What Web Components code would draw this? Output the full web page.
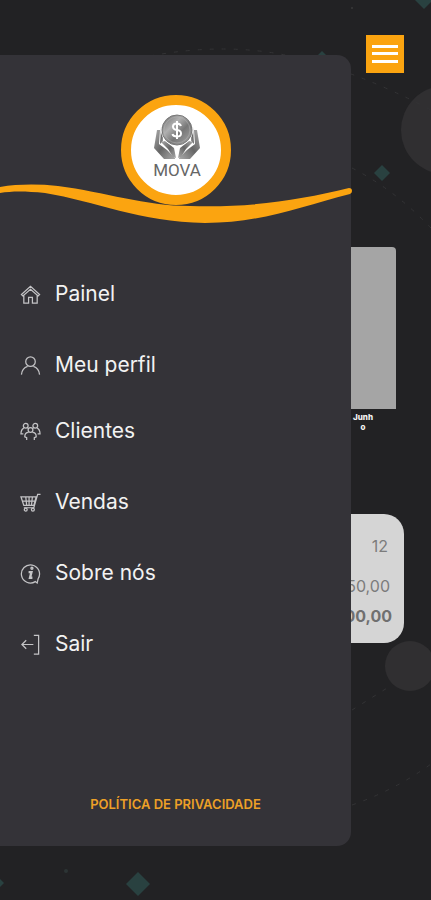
<!DOCTYPE html>
<html lang="pt-BR">
<head>
<meta charset="utf-8">
<meta name="viewport" content="width=device-width, initial-scale=1">
<title>Mova</title>
<style>
body {
  margin: 0;
  background-color: #222224;
  color: #f2f2f2;
  font-family: Inter, 'Liberation Sans', sans-serif;
}
</style>
</head>
<body>
<mova-app>
  <mova-backdrop slot="backdrop"></mova-backdrop>
  <menu-button></menu-button>
  <month-chart month="Junho"></month-chart>
  <sales-card>
    <span slot="count">12</span>
    <span slot="paid">350,00</span>
    <span slot="total">1.200,00</span>
  </sales-card>
  <side-drawer slot="drawer">
    <drawer-logo slot="header"></drawer-logo>
    <menu-item icon="home">Painel</menu-item>
    <menu-item icon="user">Meu perfil</menu-item>
    <menu-item slot="business" icon="group">Clientes</menu-item>
    <menu-item slot="business" icon="cart">Vendas</menu-item>
    <menu-item slot="business" icon="info">Sobre nós</menu-item>
    <menu-item slot="business" icon="exit">Sair</menu-item>
    <policy-link slot="footer">POLÍTICA DE PRIVACIDADE</policy-link>
  </side-drawer>
</mova-app>

<script>
/**
 * Creates a template element from a string.
 *
 * @param {string} html - The markup and styles.
 * @returns {HTMLTemplateElement} The template.
 */
function createTemplate (html) {
  const template = document.createElement('template')
  template.innerHTML = html
  return template
}

/**
 * Base class that attaches the shadow root and clones the template.
 */
class BaseElement extends HTMLElement {
  constructor () {
    super()
    this.attachShadow({ mode: 'open' })
      .appendChild(this.constructor.template.content.cloneNode(true))
  }
}

/**
 * The page, with the drawer stacked in the same grid cell.
 */
customElements.define('mova-app', class extends BaseElement {
  static template = createTemplate(`
<style>
:host {
  display: grid;
  grid-template-columns: minmax(0, 1fr);
  min-height: 100vh;
  position: relative;
  overflow: hidden;
}
main, .drawer {
  grid-area: 1 / 1;
  position: relative;
}
main {
  display: flex;
  flex-direction: column;
  padding: 35px 27px;
}
.drawer {
  display: flex;
  padding: 55px 80px 54px 0;
  pointer-events: none;
}
</style>
<slot name="backdrop"></slot>
<main><slot></slot></main>
<div class="drawer"><slot name="drawer"></slot></div>
`)
})

/**
 * Faint shapes behind the page.
 */
customElements.define('mova-backdrop', class extends BaseElement {
  static template = createTemplate(`
<style>
:host {
  display: block;
  position: absolute;
  inset: 0;
}
svg {
  display: block;
  width: 100%;
  height: 100%;
}
</style>
<svg viewBox="0 0 431 900" preserveAspectRatio="xMidYMid slice" aria-hidden="true">
  <g fill="#302f31">
    <circle cx="445" cy="130" r="44"/>
    <circle cx="410" cy="666" r="25"/>
  </g>
  <g fill="#294140">
    <path d="M382 165l8 8-8 8-8-8z"/>
    <path d="M424-9l9 9-9 9-9-9z"/>
    <path d="M138 872l12 12-12 12-12-12z"/>
    <path d="M-5 874l9 9-9 9z"/>
    <path d="M322 51l4 4-4 4-4-4z"/>
  </g>
  <g fill="none" stroke="#333335" stroke-dasharray="4 8">
    <path d="M150 56Q225 42 290 56T431 110"/>
    <path d="M352 168Q395 190 431 228"/>
    <path d="M352 710L392 685"/>
    <path d="M352 805Q395 790 431 764"/>
  </g>
  <circle cx="352" cy="8" r="1" fill="#3a3a3a"/>
  <circle cx="66" cy="871" r="2" fill="#2c3435"/>
</svg>
`)
})

customElements.define('menu-button', class extends BaseElement {
  static template = createTemplate(`
<style>
:host {
  display: block;
  align-self: flex-end;
}
button {
  display: flex;
  align-items: center;
  justify-content: center;
  width: 38px;
  height: 38px;
  padding: 0;
  border: none;
  background-color: #fba410;
  cursor: pointer;
}
svg { display: block; }
</style>
<button type="button" aria-label="Menu">
  <svg width="26" height="20" viewBox="0 0 26 20" stroke="#fff" stroke-width="3">
    <path d="M0 2.500h26M0 9.500h26M0 17.500h26"/>
  </svg>
</button>
`)
})

/**
 * Chart with one bar and the month below it.
 */
customElements.define('month-chart', class extends BaseElement {
  static template = createTemplate(`
<style>
:host {
  display: flex;
  flex-direction: column;
  align-items: center;
  align-self: flex-end;
  width: 66px;
  margin: 174px 8px 0 0;
}
.bar {
  width: 100%;
  height: 162px;
  border-radius: 4px 4px 0 0;
  background-color: #a5a5a5;
}
.month {
  width: 20px;
  margin-top: 3px;
  font-size: 8px;
  font-weight: 800;
  line-height: 10px;
  text-align: center;
  overflow-wrap: anywhere;
}
</style>
<div class="bar"></div>
<div class="month"></div>
`)

  connectedCallback () {
    this.shadowRoot.querySelector('.month').textContent = this.getAttribute('month')
  }
})

/**
 * Card with the figures of the month.
 */
customElements.define('sales-card', class extends BaseElement {
  static template = createTemplate(`
<style>
:host {
  display: flex;
  flex-direction: column;
  align-items: flex-end;
  margin-top: 82px;
  padding: 17px 12px 12px;
  border-radius: 20px;
  background-color: #d5d5d5;
  color: #7c7c7c;
  font-size: 16px;
  line-height: 30px;
}
.count { margin: 0 4px 10px 0; }
.paid { margin-right: 2px; }
.total { font-weight: 700; color: #707070; }
</style>
<div class="count"><slot name="count"></slot></div>
<div class="paid"><slot name="paid"></slot></div>
<div class="total"><slot name="total"></slot></div>
`)
})

/**
 * Drawer with a header, two groups of items and a footer.
 */
customElements.define('side-drawer', class extends BaseElement {
  static template = createTemplate(`
<style>
:host {
  display: flex;
  flex: 1;
  flex-direction: column;
  min-width: 0;
  border-radius: 0 14px 14px 0;
  background-color: #343338;
  pointer-events: auto;
}
nav {
  display: flex;
  flex-direction: column;
  gap: 40px;
  padding: 55px 20px 40px;
}
.group {
  display: flex;
  flex-direction: column;
  gap: 45px;
}
footer {
  margin-top: auto;
  padding-bottom: 32px;
  text-align: center;
}
</style>
<slot name="header"></slot>
<nav>
  <div class="group"><slot></slot></div>
  <div class="group"><slot name="business"></slot></div>
</nav>
<footer><slot name="footer"></slot></footer>
`)
})

/**
 * Round logo that rests on the orange wave.
 */
customElements.define('drawer-logo', class extends BaseElement {
  static template = createTemplate(`
<style>
:host { display: block; }
svg {
  display: block;
  width: 100%;
  overflow: visible;
}
text {
  font-family: Roboto, sans-serif;
  font-size: 17px;
}
</style>
<svg viewBox="0 0 351 171" role="img" aria-label="Mova">
  <defs>
    <linearGradient id="steel" x1="0" y1="0" x2="1" y2="1">
      <stop offset="0" stop-color="#666"/>
      <stop offset=".35" stop-color="#b0b0b0"/>
      <stop offset=".6" stop-color="#777"/>
      <stop offset="1" stop-color="#aaa"/>
    </linearGradient>
    <linearGradient id="hand" x1="0" y1="0" x2="1" y2="1">
      <stop offset="0" stop-color="#aaa"/>
      <stop offset=".5" stop-color="#666"/>
      <stop offset="1" stop-color="#aaa"/>
    </linearGradient>
  </defs>
  <path fill="#fba410" d="M0 132C18 129 38 129 58 131C105 137 145 151 190 151C250 153 300 145 349 133Q352 133 352 136Q352 138 350 139C300 152 260 168 205 168C140 167 95 146 45 138C25 136 12 136 0 138Z"/>
  <circle cx="176" cy="95" r="50" fill="#fff" stroke="#fba410" stroke-width="10"/>
  <g fill="url(#hand)">
    <path d="M157 75h3l-1 14 8 6 8 8v1h-11l-10-11z"/>
    <path d="M161 72h2v14l-3 3z"/>
    <path d="M161 87l4-1 9 7 2 10-3-1-5-8z"/>
  </g>
  <g fill="url(#hand)" transform="matrix(-1 0 0 1 354 0)">
    <path d="M157 75h3l-1 14 8 6 8 8v1h-11l-10-11z"/>
    <path d="M161 72h2v14l-3 3z"/>
    <path d="M161 87l4-1 9 7 2 10-3-1-5-8z"/>
  </g>
  <circle cx="177" cy="75" r="16" fill="#fff"/>
  <circle cx="177" cy="75" r="15" fill="url(#steel)" stroke="#777"/>
  <circle cx="177" cy="75" r="13" fill="none" stroke="#b5b5b5" stroke-width=".5"/>
  <path d="M181 71Q180 68.500 177 68.500Q173 68.500 173 71.500T177 75T181 78.500T177 81.500Q173 81.500 172.500 79M177 66V84" fill="none" stroke="#fff" stroke-width="2"/>
  <text x="177" y="121" text-anchor="middle" fill="#666">MOVA</text>
</svg>
`)
})

/**
 * Icons of the menu, on a 22 x 22 grid.
 */
const icons = {
  home: '<path d="M1.500 11L11 2.500L20.500 11L19 12.500L11 5.500L3 12.500ZM4 12V20H9V14H13V20H18V12"/>',
  user: '<circle cx="11" cy="7" r="5"/><path d="M1.500 20.500C2 15.500 5 13 8 12M14 12C17 13 20 15.500 20.500 20.500"/>',
  group: '<circle cx="6" cy="5" r="2.500"/><circle cx="16" cy="5" r="2.500"/><circle cx="11" cy="9.500" r="2.500"/><path d="M4 7.500Q1 9 1 13.500H3.500M8 7.500L9 8M18 7.500Q21 9 21 13.500H18.500M14 7.500L13 8M9 12Q5 12 5 16.500L7 17.500V20M13 12Q17 12 17 16.500L15 17.500V20"/>',
  cart: '<path d="M1 5H17L14.500 14H4ZM21.500 2.500H18.500L14.500 16.500H4M2 9.500H15.500M6 5L7 14M9.500 5V14M13 5L12 14"/><circle cx="6" cy="18.500" r="1.500"/><circle cx="13.500" cy="18.500" r="1.500"/>',
  info: '<path d="M16 19.500A9.500 9.500 0 1 1 19 16.500L18 21Z"/><path d="M9 9.500H12L10.500 15.500H13" stroke-width="2.500"/><circle cx="12.500" cy="5.500" r="1" stroke-width="1.500"/>',
  exit: '<path d="M14 11H2M6.500 6.500L2 11L6.500 15.500M14.500 1.500H19.500V21H14.500"/>'
}

/**
 * One entry of the menu.
 */
customElements.define('menu-item', class extends BaseElement {
  static template = createTemplate(`
<style>
:host { display: block; }
a {
  display: flex;
  align-items: center;
  gap: 14px;
  color: inherit;
  font-size: 21px;
  line-height: 26px;
  text-decoration: none;
}
svg {
  flex: none;
  width: 21px;
  height: 21px;
}
</style>
<a href="#">
  <svg viewBox="0 0 22 22" fill="none" stroke="#c4c4c6" stroke-width="1.300" aria-hidden="true"></svg>
  <slot></slot>
</a>
`)

  connectedCallback () {
    this.shadowRoot.querySelector('svg').innerHTML = icons[this.getAttribute('icon')]
  }
})

/**
 * Link at the bottom of the drawer.
 */
customElements.define('policy-link', class extends BaseElement {
  static template = createTemplate(`
<style>
:host { display: block; }
a {
  color: #eda027;
  font-size: 13px;
  font-weight: 600;
  line-height: 20px;
  text-decoration: none;
}
</style>
<a href="#"><slot></slot></a>
`)
})
</script>
</body>
</html>
